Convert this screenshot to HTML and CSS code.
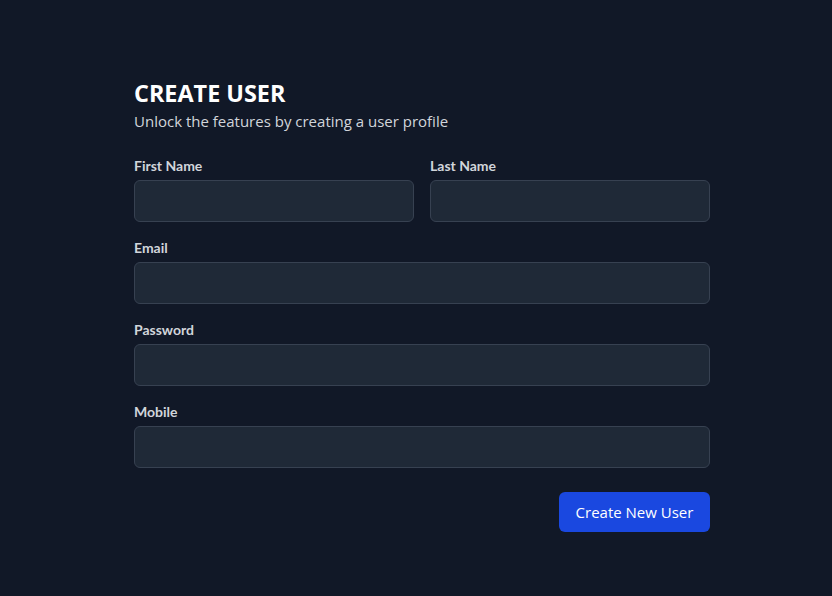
FILE: index.html
```html
<!DOCTYPE html>
<html lang="en">
<head>
<meta charset="utf-8">
<title>Create User</title>
<link rel="stylesheet" href="styles.css">
</head>
<body>
<main class="page">
  <form class="card">
    <header class="head">
      <h1 class="title">CREATE USER</h1>
      <p class="subtitle">Unlock the features by creating a user profile</p>
    </header>
    <div class="row">
      <div class="field">
        <label class="label">First Name</label>
        <input class="input" type="text">
      </div>
      <div class="field">
        <label class="label">Last Name</label>
        <input class="input" type="text">
      </div>
    </div>
    <div class="field">
      <label class="label">Email</label>
      <input class="input" type="email">
    </div>
    <div class="field">
      <label class="label">Password</label>
      <input class="input" type="password">
    </div>
    <div class="field">
      <label class="label">Mobile</label>
      <input class="input" type="text">
    </div>
    <div class="actions">
      <button class="btn" type="button">Create New User</button>
    </div>
  </form>
</main>
</body>
</html>
```
FILE: styles.css
```css
* { box-sizing: border-box; }
html, body { margin: 0; padding: 0; }
body {
  background: #111827;
  height: 596px;
  font-family: "Open Sans", "Noto Sans", sans-serif;
  color: #fff;
}
.page {
  padding: 82px 0 0 134px;
}
.card {
  width: 576px;
  display: flex;
  flex-direction: column;
  gap: 16px;
}
.head { margin-bottom: 9px; }
.title {
  margin: 0;
  font-size: 23.4px;
  line-height: 22px;
  font-weight: 700;
  color: #fff;
}
.subtitle {
  margin: 7px 0 0;
  font-size: 15px;
  line-height: 20px;
  color: #d1d5db;
}
.row {
  display: grid;
  grid-template-columns: 1fr 1fr;
  gap: 16px;
}
.field {
  display: flex;
  flex-direction: column;
}
.label {
  font-family: "Lato", sans-serif;
  font-weight: 700;
  font-size: 14px;
  line-height: 20px;
  color: #d1d5db;
  margin-bottom: 4px;
}
.input {
  height: 42px;
  background: #1f2937;
  border: 1px solid #374151;
  border-radius: 6px;
  color: #fff;
  outline: none;
  padding: 0 12px;
}
.actions {
  display: flex;
  justify-content: flex-end;
  margin-top: 8px;
}
.btn {
  height: 40px;
  width: 151px;
  background: #1a48e0;
  color: #fff;
  border: 0;
  border-radius: 6px;
  font-family: "Open Sans", "Noto Sans", sans-serif;
  font-size: 15px;
}
```
